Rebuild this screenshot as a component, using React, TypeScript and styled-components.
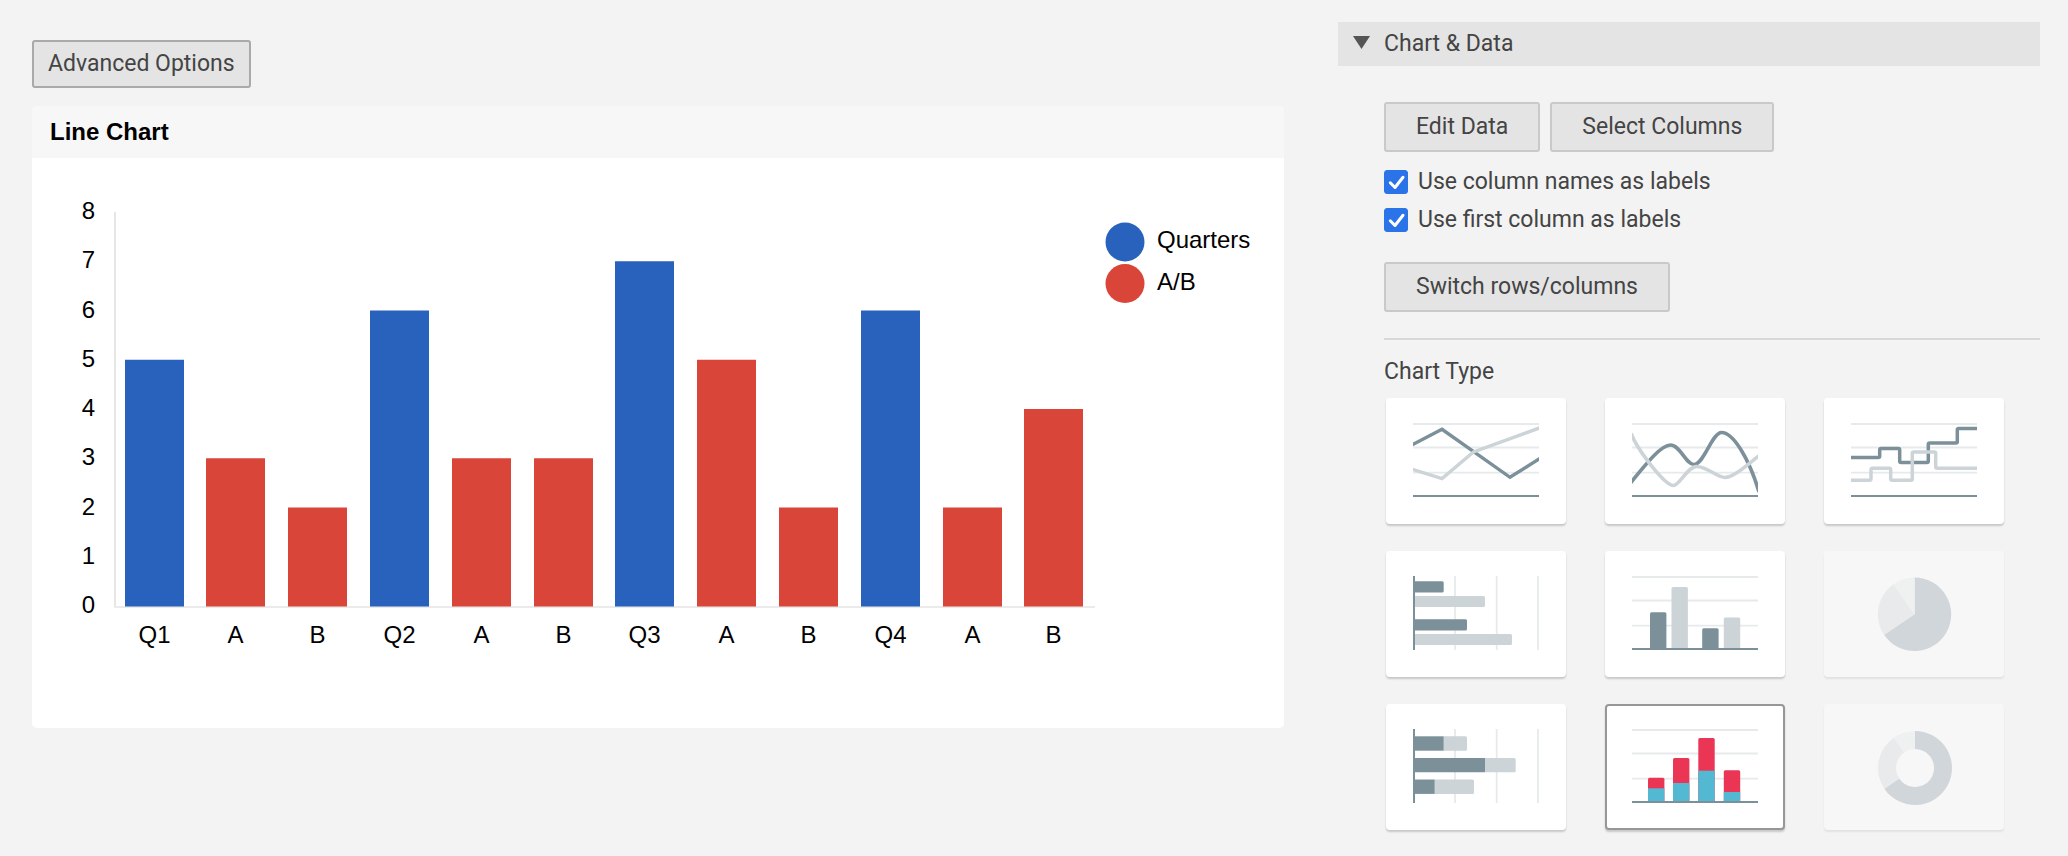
import React, { useState } from 'react';
import styled, { createGlobalStyle, css } from 'styled-components';

const GlobalStyle = createGlobalStyle`
  * { box-sizing: border-box; }
  body {
    margin: 0;
    background: #f3f3f3;
    color: #444;
    font-family: Roboto, "Liberation Sans", sans-serif;
    font-size: 23px;
    line-height: 28px;
  }
  button { font: inherit; color: inherit; cursor: pointer; }
`;

const Page = styled.main`
  display: grid;
  grid-template-columns: minmax(0, 1252fr) minmax(0, 702fr);
  column-gap: 54px;
  align-items: start;
  padding: 22px 28px 26px 32px;
`;

const Preview = styled.section`
  display: flex;
  flex-direction: column;
  align-items: flex-start;
  gap: 18px;
  padding-top: 18px;
`;

const Button = styled.button<{ $compact?: boolean }>`
  height: ${(p) => (p.$compact ? 48 : 50)}px;
  padding: 0 ${(p) => (p.$compact ? 14 : 30)}px;
  border: 2px solid ${(p) => (p.$compact ? '#a9a9a9' : '#c9c9c9')};
  border-radius: 3px;
  background: #e4e4e4;
  white-space: nowrap;
`;

const ChartCard = styled.figure`
  width: 100%;
  margin: 0;
  border-radius: 5px;
  overflow: hidden;
  background: #fff;
  color: #000;
  font-family: "Liberation Sans", Arial, sans-serif;
  font-size: 24px;
`;

const ChartTitle = styled.figcaption`
  padding: 12px 18px;
  background: #f7f7f7;
  font-weight: bold;
`;

const ChartSvg = styled.svg`
  display: block;
  width: 100%;
  height: auto;
`;

const Panel = styled.aside`
  display: flex;
  flex-direction: column;
`;

const PanelHeader = styled.button`
  display: flex;
  align-items: center;
  gap: 14px;
  height: 44px;
  padding: 0 15px;
  border: 0;
  background: #e4e4e4;
  text-align: left;
`;

const Arrow = styled.svg`
  width: 17px;
  height: 17px;
  fill: #555;
`;

const PanelBody = styled.div`
  padding: 36px 0 0 46px;
`;

const ButtonRow = styled.div`
  display: flex;
  gap: 10px;
`;

const Options = styled.div`
  display: flex;
  flex-direction: column;
  gap: 10px;
  padding: 16px 0 28px;
`;

const OptionLabel = styled.label`
  display: flex;
  align-items: center;
  gap: 10px;
`;

const Tick = styled.span`
  display: grid;
  width: 24px;
  height: 24px;
  > * { grid-area: 1 / 1; }
  svg { pointer-events: none; visibility: hidden; }
  input:checked + svg { visibility: visible; }
`;

const TickInput = styled.input`
  appearance: none;
  width: 24px;
  height: 24px;
  margin: 0;
  border: 1px solid #999;
  border-radius: 3px;
  background: #fff;
  &:checked { border-color: #2a73e8; background: #2a73e8; }
`;

const Divider = styled.hr`
  height: 2px;
  margin: 26px 0 18px;
  border: 0;
  background: #d8d8d8;
`;

const GroupTitle = styled.h2`
  margin: 0 0 12px;
  font-size: 23px;
  font-weight: 400;
  line-height: 28px;
`;

const TypeGrid = styled.div`
  display: grid;
  grid-template-columns: repeat(3, 180px);
  gap: 27px 39px;
  padding-left: 2px;
`;

const TypeCard = styled.button`
  display: flex;
  align-items: center;
  justify-content: center;
  height: 126px;
  padding: 0;
  border: 2px solid #fff;
  border-radius: 4px;
  background: #fff;
  box-shadow: 0 2px 2px rgba(0, 0, 0, 0.18);
  ${(p) => p['aria-pressed'] && css`border-color: #979797;`}
  &:disabled {
    border-color: #f7f7f7;
    background: #f7f7f7;
    box-shadow: 0 2px 2px rgba(0, 0, 0, 0.07);
    cursor: default;
  }
`;

const SERIES = { blue: '#2962bc', red: '#d94539' };
const DATA = [
  { label: 'Q1', value: 5 }, { label: 'A', value: 3 }, { label: 'B', value: 2 },
  { label: 'Q2', value: 6 }, { label: 'A', value: 3 }, { label: 'B', value: 3 },
  { label: 'Q3', value: 7 }, { label: 'A', value: 5 }, { label: 'B', value: 2 },
  { label: 'Q4', value: 6 }, { label: 'A', value: 2 }, { label: 'B', value: 4 },
];
const LEGEND = [
  { name: 'Quarters', color: SERIES.blue },
  { name: 'A/B', color: SERIES.red },
];

const LEFT = 83;
const BASE = 448;
const UNIT = 49.25;
const SLOT = 81.8;

function BarChart() {
  return (
    <ChartSvg viewBox="0 0 1252 570" role="img" aria-label="Values by quarter and group">
      <path d={`M${LEFT} 54V${BASE + 1}`} stroke="#e6e6e6" strokeWidth="2" />
      <path d={`M${LEFT - 1} ${BASE + 1}H1063`} stroke="#ebebeb" strokeWidth="2" />
      {[0, 1, 2, 3, 4, 5, 6, 7, 8].map((n) => (
        <text key={n} x="63" y={Math.round(BASE - n * UNIT) + 7} textAnchor="end">{n}</text>
      ))}
      {DATA.map((d, i) => {
        const x = Math.round(LEFT + 9.6 + i * SLOT);
        return (
          <g key={i}>
            <rect x={x} y={BASE - d.value * UNIT} width="59" height={d.value * UNIT + 0.5}
              fill={i % 3 === 0 ? SERIES.blue : SERIES.red} />
            <text x={x + 29.5} y="485" textAnchor="middle">{d.label}</text>
          </g>
        );
      })}
      {LEGEND.map((s, i) => (
        <g key={s.name}>
          <circle cx="1093" cy={84 + i * 41.5} r="19.5" fill={s.color} />
          <text x="1125" y={90 + i * 42}>{s.name}</text>
        </g>
      ))}
    </ChartSvg>
  );
}

const DARK = '#7c909a';
const LIGHT = '#ccd4d8';
const GRID = '#e6eaeb';

const rowsGrid = (
  <>
    <path d="M27 26H153M27 49.5H153M27 74.7H153" stroke={GRID} strokeWidth="1.8" />
    <path d="M27 98H153" stroke={DARK} strokeWidth="2" />
  </>
);
const colsGrid = (
  <>
    <path d="M69 25V99M110.7 25V99M152 25V99" stroke={GRID} strokeWidth="1.8" />
    <path d="M28 25V99" stroke={DARK} strokeWidth="2" />
  </>
);

const stepDark = 'M27 59.5H54Q55.7 59.5 55.7 58V52Q55.7 50.5 57.2 50.5H74.2Q75.7 50.5 75.7 52V63Q75.7 64.5 77.2 64.5H102.8Q104.3 64.5 104.3 63V46.5Q104.3 45 105.8 45H131.8Q133.3 45 133.3 43.5V32Q133.3 30.5 134.8 30.5H153';
const stepLight = 'M27 82.3H45.5Q47 82.3 47 80.8V72Q47 70.3 48.5 70.3H65.2Q66.7 70.3 66.7 72V80.8Q66.7 82.3 68.2 82.3H86.8Q88.3 82.3 88.3 80.8V55.5Q88.3 54 89.8 54H110.2Q111.7 54 111.7 55.5V68.8Q111.7 70.3 113.2 70.3H153';

function hBar(x1: number, x2: number, y: number, h: number, fill: string, end = true) {
  return end
    ? <path d={`M${x1} ${y}H${x2 - 1.5}Q${x2} ${y} ${x2} ${y + 1.5}V${y + h - 1.5}Q${x2} ${y + h} ${x2 - 1.5} ${y + h}H${x1}Z`} fill={fill} />
    : <path d={`M${x1} ${y}H${x2}V${y + h}H${x1}Z`} fill={fill} />;
}
function vBar(x: number, y: number, fill: string, w = 16.4) {
  return <path d={`M${x} 97V${y + 1.5}Q${x} ${y} ${x + 1.5} ${y}H${x + w - 1.5}Q${x + w} ${y} ${x + w} ${y + 1.5}V97Z`} fill={fill} />;
}

function slice(cx: number, cy: number, r: number, inner: number, from: number, to: number) {
  const at = (deg: number, rad: number) => {
    const a = (deg * Math.PI) / 180;
    return `${(cx + rad * Math.sin(a)).toFixed(2)} ${(cy - rad * Math.cos(a)).toFixed(2)}`;
  };
  const big = to - from > 180 ? 1 : 0;
  return `M${at(from, r)}A${r} ${r} 0 ${big} 1 ${at(to, r)}L${at(to, inner)}${
    inner ? `A${inner} ${inner} 0 ${big} 0 ${at(from, inner)}` : ''}Z`;
}
function Ring({ cx, cy, r, inner }: { cx: number; cy: number; r: number; inner: number }) {
  return (
    <>
      <path d={slice(cx, cy, r, inner, 0, 236)} fill="#d1d6da" />
      <path d={slice(cx, cy, r, inner, 236, 325)} fill="#e8eaeb" />
      <path d={slice(cx, cy, r, inner, 325, 360)} fill="#eff1f1" />
    </>
  );
}

const STACKS = [[43, 73.7, 84.3], [68, 54, 79], [93.3, 34, 66.7], [118.8, 66.3, 88]];

const TYPES: { name: string; disabled?: boolean; art: React.ReactNode }[] = [
  {
    name: 'Line',
    art: (
      <g fill="none" strokeWidth="3.4">
        {rowsGrid}
        <path d="M24 48L56 31.3L124 79.3L156 59" stroke={DARK} />
        <path d="M24 70.5L56 80.5L87.5 54L156 29" stroke={LIGHT} />
      </g>
    ),
  },
  {
    name: 'Smooth line',
    art: (
      <g fill="none" strokeWidth="3.6">
        {rowsGrid}
        <path d="M25 85.5C41 66 56 47 65.5 47C75 47 81 66.5 89 66.5C99 66.5 107 34.5 116.5 34.5C128 34.5 144 60 154 94" stroke={DARK} />
        <path d="M26 35.5C33 53 60 87.5 68.5 87.5C74 87.5 83 68.5 91.5 68.5C102 68.5 112 79.5 120 79.5C129 79.5 143 66 155 57" stroke={LIGHT} />
      </g>
    ),
  },
  {
    name: 'Stepped line',
    art: (
      <g fill="none" strokeWidth="3.5">
        {rowsGrid}
        <path d={stepDark} stroke={DARK} />
        <path d={stepLight} stroke={LIGHT} />
      </g>
    ),
  },
  {
    name: 'Bar',
    art: (
      <>
        {colsGrid}
        {hBar(29, 57.7, 30.3, 11.3, DARK)}
        {hBar(29, 99, 45, 11, LIGHT)}
        {hBar(29, 81, 68.2, 11.3, DARK)}
        {hBar(29, 126, 83, 11, LIGHT)}
      </>
    ),
  },
  {
    name: 'Column',
    art: (
      <>
        {rowsGrid}
        {vBar(45, 61.2, DARK)}
        {vBar(66.5, 36, LIGHT)}
        {vBar(97.2, 77.3, DARK)}
        {vBar(118.8, 66.4, LIGHT)}
      </>
    ),
  },
  { name: 'Pie', disabled: true, art: <Ring cx={90.5} cy={63.3} r={36.7} inner={0} /> },
  {
    name: 'Stacked bar',
    art: (
      <>
        {colsGrid}
        {hBar(57.7, 81, 32.3, 14.4, LIGHT)}
        {hBar(29, 57.7, 32.3, 14.4, DARK, false)}
        {hBar(99, 129.7, 54, 14.2, LIGHT)}
        {hBar(29, 99, 54, 14.2, DARK, false)}
        {hBar(48.7, 88, 75.5, 14.4, LIGHT)}
        {hBar(29, 48.7, 75.5, 14.4, DARK, false)}
      </>
    ),
  },
  {
    name: 'Stacked column',
    art: (
      <>
        {rowsGrid}
        {STACKS.map(([x, top, split]) => (
          <g key={x}>
            {vBar(x, top, '#eb3555')}
            <rect x={x} y={split} width="16.4" height={97 - split} fill="#53b9d3" />
          </g>
        ))}
      </>
    ),
  },
  { name: 'Donut', disabled: true, art: <Ring cx={91} cy={64} r={37} inner={19} /> },
];

function Option({ text }: { text: string }) {
  return (
    <OptionLabel>
      <Tick>
        <TickInput type="checkbox" defaultChecked />
        <svg viewBox="0 0 24 24" fill="none" stroke="#fff" strokeWidth="3" strokeLinecap="round" strokeLinejoin="round" aria-hidden="true">
          <path d="M6.3 12.8L11 17.5L19 7.3" />
        </svg>
      </Tick>
      {text}
    </OptionLabel>
  );
}

export default function App() {
  const [open, setOpen] = useState(true);
  const [type, setType] = useState('Stacked column');
  return (
    <>
      <GlobalStyle />
      <Page>
        <Preview>
          <Button type="button" $compact>Advanced Options</Button>
          <ChartCard>
            <ChartTitle>Line Chart</ChartTitle>
            <BarChart />
          </ChartCard>
        </Preview>
        <Panel>
          <PanelHeader type="button" aria-expanded={open} onClick={() => setOpen(!open)}>
            <Arrow viewBox="0 0 17 17" aria-hidden="true"><path d="M0 0H17L8.5 13Z" /></Arrow>
            Chart &amp; Data
          </PanelHeader>
          {open && (
            <PanelBody>
              <ButtonRow>
                <Button type="button">Edit Data</Button>
                <Button type="button">Select Columns</Button>
              </ButtonRow>
              <Options>
                <Option text="Use column names as labels" />
                <Option text="Use first column as labels" />
              </Options>
              <Button type="button">Switch rows/columns</Button>
              <Divider />
              <GroupTitle>Chart Type</GroupTitle>
              <TypeGrid>
                {TYPES.map((t) => (
                  <TypeCard key={t.name} type="button" aria-label={t.name} disabled={t.disabled}
                    aria-pressed={type === t.name} onClick={() => setType(t.name)}>
                    <svg width="126" height="76" viewBox="27 25 126 76" aria-hidden="true">{t.art}</svg>
                  </TypeCard>
                ))}
              </TypeGrid>
            </PanelBody>
          )}
        </Panel>
      </Page>
    </>
  );
}
